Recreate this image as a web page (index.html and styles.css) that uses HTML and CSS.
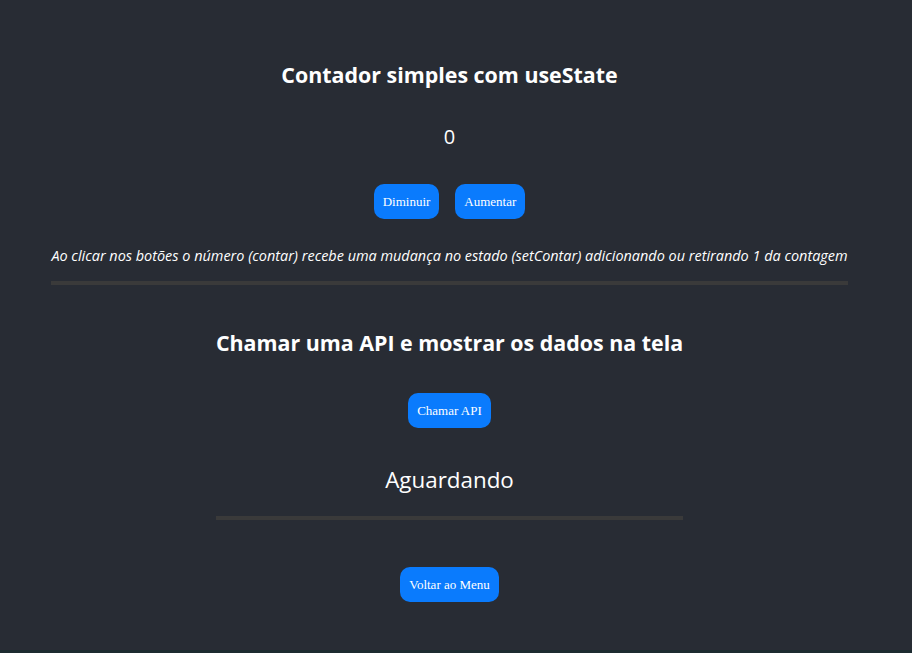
FILE: index.html
```html
<!DOCTYPE html>
<html lang="pt-BR">
<head>
<meta charset="utf-8">
<title>Exemplos</title>
<link rel="stylesheet" href="styles.css">
</head>
<body>
<div class="page">
  <main class="content">
    <section class="block">
      <h2 class="title">Contador simples com useState</h2>
      <div class="count">0</div>
      <div class="actions">
        <button class="btn">Diminuir</button>
        <button class="btn">Aumentar</button>
      </div>
      <p class="note">Ao clicar nos botões o número (contar) recebe uma mudança no estado (setContar) adicionando ou retirando 1 da contagem</p>
      <hr class="rule">
    </section>
    <section class="block block-api">
      <h2 class="title title-api">Chamar uma API e mostrar os dados na tela</h2>
      <div class="actions actions-api">
        <button class="btn">Chamar API</button>
      </div>
      <div class="status">Aguardando</div>
      <hr class="rule rule-api">
    </section>
    <div class="actions actions-back">
      <button class="btn">Voltar ao Menu</button>
    </div>
  </main>
  <div class="bottom-strip"></div>
</div>
</body>
</html>
```

FILE: styles.css
```css
html, body {
  margin: 0;
  padding: 0;
  background: #282c34;
}

.page {
  display: flex;
  flex-direction: column;
  min-height: 653px;
}

.content {
  flex: 1;
  display: flex;
  flex-direction: column;
  align-items: center;
  padding: 60px 13px 0 0;
  color: #ffffff;
  font-family: "Open Sans", "Noto Sans", sans-serif;
}

.block {
  display: flex;
  flex-direction: column;
  align-items: center;
}

.title {
  margin: 0;
  font-size: 21.4px;
  line-height: 30px;
  font-weight: 700;
}

.count {
  margin-top: 33px;
  font-size: 20px;
  line-height: 28px;
}

.actions {
  display: flex;
  gap: 16px;
  margin-top: 33px;
}

.btn {
  background: #0a7bfd;
  color: #ffffff;
  border: none;
  border-radius: 10px;
  font-family: "Liberation Serif", "Times New Roman", serif;
  font-size: 13px;
  line-height: 15px;
  padding: 10px 9px;
}

.note {
  margin: 27px 0 0;
  font-size: 14.45px;
  line-height: 20px;
  font-style: italic;
  white-space: nowrap;
}

.rule {
  align-self: stretch;
  margin: 15px 0 0;
  height: 4px;
  border: none;
  background: #3a3a3a;
}

.block-api {
  margin-top: 43px;
}

.actions-api {
  margin-top: 35px;
}

.status {
  margin-top: 37px;
  font-size: 22.4px;
  line-height: 30px;
}

.rule-api {
  margin-top: 21px;
}

.actions-back {
  margin-top: 47px;
}

.bottom-strip {
  height: 3px;
  background: #1c2b30;
}
```
